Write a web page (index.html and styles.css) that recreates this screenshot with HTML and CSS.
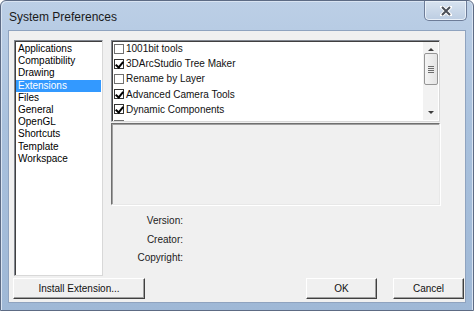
FILE: index.html
```html
<!DOCTYPE html>
<html lang="en">
<head>
  <meta charset="UTF-8" />
  <title>System Preferences</title>
  <link rel="stylesheet" href="styles.css">
</head>
<body>
  <div class="window">
    <div class="titlebar">
      <span class="title">System Preferences</span>
      <div class="close-btn" aria-label="Close">
        <svg width="12" height="10" viewBox="0 0 12 10">
          <path d="M2 1 L10 9 M10 1 L2 9" stroke="#fff" stroke-width="4" stroke-linecap="square"/>
          <path d="M2 1 L10 9 M10 1 L2 9" stroke="#4a4f58" stroke-width="2"/>
        </svg>
      </div>
    </div>

    <div class="client">
      <div class="panes">
        <!-- categories -->
        <ul class="categories">
          <li>Applications</li>
          <li>Compatibility</li>
          <li>Drawing</li>
          <li class="selected">Extensions</li>
          <li>Files</li>
          <li>General</li>
          <li>OpenGL</li>
          <li>Shortcuts</li>
          <li>Template</li>
          <li>Workspace</li>
        </ul>

        <div class="details">
          <div class="ext-list">
            <ul class="ext-items">
              <li><span class="check"></span>1001bit tools</li>
              <li><span class="check checked"></span>3DArcStudio Tree Maker</li>
              <li><span class="check"></span>Rename by Layer</li>
              <li><span class="check checked"></span>Advanced Camera Tools</li>
              <li><span class="check checked"></span>Dynamic Components</li>
              <li><span class="check"></span></li>
            </ul>
            <div class="scrollbar">
              <span class="arrow up"></span>
              <span class="thumb"><span class="grip"></span></span>
              <span class="arrow down"></span>
            </div>
          </div>

          <div class="description"></div>

          <dl class="info">
            <dt>Version:</dt><dd></dd>
            <dt>Creator:</dt><dd></dd>
            <dt>Copyright:</dt><dd></dd>
          </dl>
        </div>
      </div>

      <div class="buttons">
        <button class="btn btn-install">Install Extension...</button>
        <div class="btn-group">
          <button class="btn">OK</button>
          <button class="btn">Cancel</button>
        </div>
      </div>
    </div>
  </div>
</body>
</html>
```

FILE: styles.css
```css
* {
  box-sizing: border-box;
  margin: 0;
  padding: 0;
}
body {
  background: #ffffff;
  font-family: 'Liberation Sans', Arial, sans-serif;
  font-size: 11px;
  color: #000;
}
ul {
  list-style: none;
}

/* Window frame */
.window {
  width: 474px;
  height: 311px;
  background: linear-gradient(to bottom, #bccfe6 0%, #a9c1dd 40%, #9fb8d6 100%);
  border: 1px solid #5d6b84;
  border-radius: 6px 6px 0 0;
  display: flex;
  flex-direction: column;
  box-shadow: inset 1px 1px 0 #d9e4f2, inset -1px 0 0 #d9e4f2;
}
.titlebar {
  height: 29px;
  display: flex;
  justify-content: space-between;
  align-items: flex-start;
  padding-left: 8px;
}
.title {
  font-family: 'Liberation Sans', Arial, sans-serif;
  font-size: 12px;
  color: #1a1a1a;
  margin-top: 9px;
}
.close-btn {
  width: 43px;
  height: 20px;
  margin-right: 6px;
  border: 1px solid #6d7c98;
  border-top: none;
  border-radius: 0 0 5px 5px;
  background: linear-gradient(to bottom, #d8e3f0, #bccde2);
  box-shadow: inset 0 0 0 1px #e9f0f8;
  display: flex;
  justify-content: center;
  align-items: center;
}

/* Client area */
.client {
  flex: 1;
  margin: 0 7px 7px 7px;
  background: #f0f0f0;
  border: 1px solid #8fa3bf;
  padding: 9px 1px 3px 4px;
  display: flex;
  flex-direction: column;
}
.panes {
  display: flex;
  gap: 8px;
  height: 236px;
}

/* Category list */
.categories {
  width: 89px;
  margin-left: 1px;
  background: #fff;
  border: 1px solid #828790;
  border-right-color: #d8d8d8;
  border-bottom-color: #d8d8d8;
  box-shadow: inset 1px 1px 0 #404040;
  padding: 2px 1px;
  font-size: 10px;
}
.categories li {
  height: 12.2px;
  line-height: 12.2px;
  padding-left: 2px;
  white-space: nowrap;
}
.categories li.selected {
  background: #3399ff;
  color: #fff;
}

/* Right side */
.details {
  flex: 1;
  display: flex;
  flex-direction: column;
  margin-right: 24px;
}
.ext-list {
  height: 82px;
  display: flex;
  background: #fff;
  border: 1px solid #828790;
  border-right-color: #d8d8d8;
  border-bottom-color: #d8d8d8;
  box-shadow: inset 1px 1px 0 #404040;
  overflow: hidden;
}
.ext-items {
  flex: 1;
  padding: 0 0 0 2px;
  overflow: hidden;
}
.ext-items li {
  height: 15.2px;
  display: flex;
  align-items: center;
  gap: 2px;
  white-space: nowrap;
  font-size: 10px;
  color: #111;
}
.check {
  width: 10px;
  height: 10px;
  border: 1px solid #707070;
  background: #fff;
  flex-shrink: 0;
  position: relative;
}
.check.checked {
  border-color: #333;
}
.check.checked::after {
  content: "";
  position: absolute;
  left: 2px;
  top: 0px;
  width: 3px;
  height: 6px;
  border: solid #000;
  border-width: 0 2px 2px 0;
  transform: rotate(40deg);
}

.scrollbar {
  width: 15px;
  margin: 1px 1px 1px 0;
  background: #f2f2f2;
  display: flex;
  flex-direction: column;
  align-items: center;
  justify-content: space-between;
}
.arrow {
  width: 0;
  height: 0;
  border-left: 3px solid transparent;
  border-right: 3px solid transparent;
  margin: 6px 0;
}
.arrow.up {
  border-bottom: 3px solid #3c3c3c;
}
.arrow.down {
  border-top: 3px solid #3c3c3c;
}
.thumb {
  width: 14px;
  height: 32px;
  margin-top: -4px;
  margin-bottom: auto;
  border: 1px solid #959595;
  border-radius: 2px;
  background: linear-gradient(to right, #f4f4f4, #e4e4e4);
  display: flex;
  justify-content: center;
  align-items: center;
}
.grip {
  width: 6px;
  height: 7px;
  background: repeating-linear-gradient(to bottom, #6c6c6c 0 1px, transparent 1px 2px);
}

.description {
  height: 82px;
  margin-top: 1px;
  border: 1px solid #e8e8e8;
  border-top-color: #6f6f6f;
  border-left-color: #6f6f6f;
  box-shadow: inset 1px 1px 0 #a0a0a0, 1px 1px 0 #fff;
}

.info {
  display: grid;
  grid-template-columns: 72px 1fr;
  row-gap: 6px;
  margin-top: 10px;
  font-size: 10px;
  color: #222;
}
.info dt {
  text-align: right;
  height: 12.5px;
  line-height: 12.5px;
}

/* Buttons */
.buttons {
  display: flex;
  justify-content: space-between;
  align-items: flex-end;
  margin-top: auto;
}
.btn-group {
  display: flex;
  gap: 16px;
}
.btn {
  font-family: 'Liberation Sans', Arial, sans-serif;
  font-size: 10px;
  color: #111;
  width: 71px;
  height: 21px;
  background: #f0f0f0;
  border: 1px solid #fff;
  border-right-color: #404040;
  border-bottom-color: #404040;
  box-shadow: inset -1px -1px 0 #a0a0a0;
}
.btn-install {
  width: 132px;
}
```
